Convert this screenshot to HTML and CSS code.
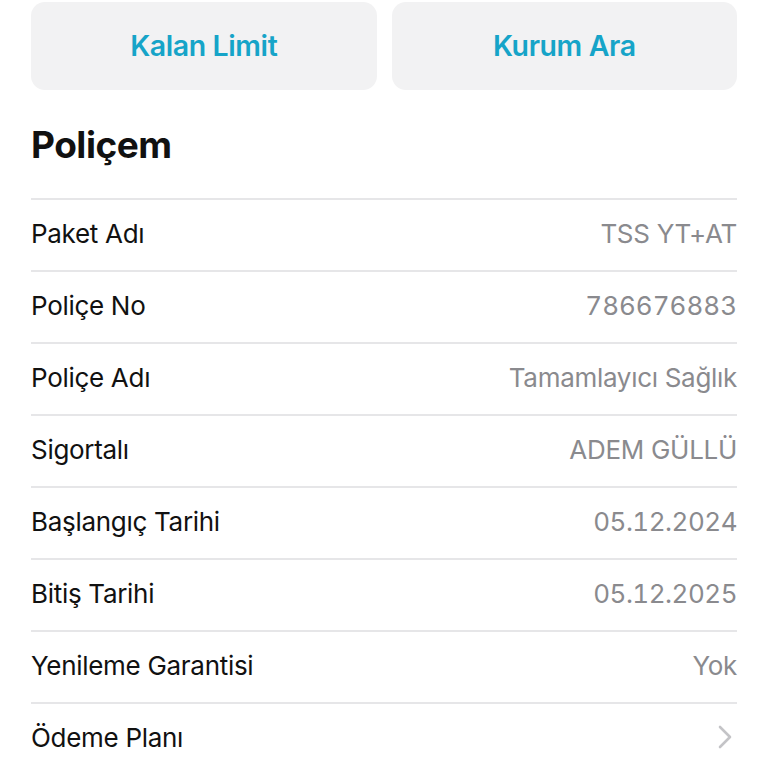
FILE: index.html
```html
<!DOCTYPE html>
<html lang="tr">
<head>
<meta charset="utf-8">
<link rel="stylesheet" href="styles.css">
</head>
<body>
<div class="page">
  <div class="actions">
    <button class="action">Kalan Limit</button>
    <button class="action">Kurum Ara</button>
  </div>
  <h1 class="title">Poliçem</h1>
  <div class="list">
    <div class="row"><span class="label">Paket Adı</span><span class="value">TSS YT+AT</span></div>
    <div class="row"><span class="label">Poliçe No</span><span class="value num">786676883</span></div>
    <div class="row"><span class="label">Poliçe Adı</span><span class="value">Tamamlayıcı Sağlık</span></div>
    <div class="row"><span class="label">Sigortalı</span><span class="value">ADEM GÜLLÜ</span></div>
    <div class="row"><span class="label">Başlangıç Tarihi</span><span class="value num date">05.12.2024</span></div>
    <div class="row"><span class="label">Bitiş Tarihi</span><span class="value num date">05.12.2025</span></div>
    <div class="row"><span class="label">Yenileme Garantisi</span><span class="value">Yok</span></div>
    <div class="row"><span class="label">Ödeme Planı</span>
      <svg class="chev" width="16" height="24" viewBox="0 0 16 24"><path d="M3 2 L13 12 L3 22" fill="none" stroke="#c4c4c7" stroke-width="2.6" stroke-linecap="round" stroke-linejoin="round"/></svg>
    </div>
  </div>
</div>
</body>
</html>
```
FILE: styles.css
```css
html, body {
  margin: 0;
  padding: 0;
  background: #ffffff;
}
body {
  font-family: Inter, "Noto Sans", "Liberation Sans", sans-serif;
  color: #111111;
}
.page {
  padding: 2px 31px 0 31px;
}
.actions {
  display: flex;
  gap: 15px;
}
.action {
  flex: 1;
  height: 88px;
  border: none;
  border-radius: 14px;
  background: #f2f2f3;
  color: #16a4c8;
  font-family: inherit;
  font-size: 28.5px;
  font-weight: 600;
  letter-spacing: -0.4px;
  padding: 0 0 2px 0;
}
.title {
  margin: 0;
  height: 108px;
  display: flex;
  align-items: center;
  font-size: 37px;
  font-weight: 700;
  letter-spacing: -0.5px;
}
.list {
  border-top: 2px solid #e6e6e8;
}
.row {
  box-sizing: border-box;
  height: 72px;
  padding-bottom: 4px;
  border-bottom: 2px solid #e6e6e8;
  display: flex;
  align-items: center;
  justify-content: space-between;
  font-size: 26px;
  letter-spacing: -0.3px;
}
.row:last-child {
  border-bottom-color: transparent;
}
.value {
  color: #8a8a8e;
}
.num {
  font-variant-numeric: tabular-nums;
  letter-spacing: 0;
}
.date {
  letter-spacing: -0.5px;
}
.chev {
  margin-right: 4px;
}
```
